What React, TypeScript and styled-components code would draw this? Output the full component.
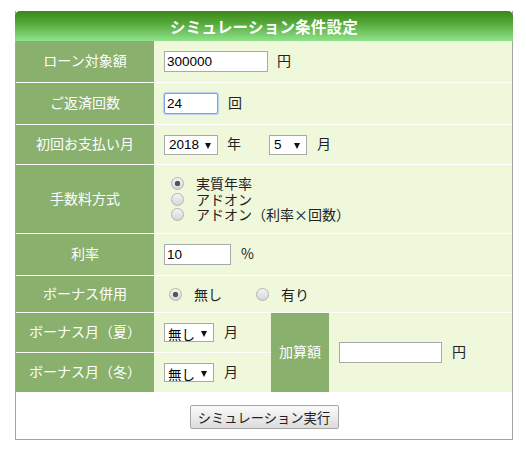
import React from "react";
import styled, { createGlobalStyle } from "styled-components";

const Global = createGlobalStyle`
  html, body { margin: 0; padding: 0; background: #fff; }
  body { font-family: "Noto Sans CJK JP", "Liberation Sans", sans-serif; }
`;

const Page = styled.div`
  padding: 11px 0 0 15px;
`;

const Panel = styled.div`
  width: 498px;
  box-sizing: border-box;
  border: 1px solid #a3a3a3;
  border-top: none;
`;

const Header = styled.div`
  margin: 0 -1px;
  height: 30px;
  border-radius: 5px 5px 0 0;
  background: linear-gradient(#3a8a1b 0%, #55a838 40%, #8fe28b 100%);
  color: #fff;
  font-size: 15.5px;
  font-weight: bold;
  display: flex;
  align-items: center;
  justify-content: center;
  letter-spacing: 0.2px;
`;

const FormGrid = styled.div`
  display: grid;
  grid-template-columns: 138px 117px 58px 1fr;
  grid-template-rows: 42px 42px 40px 69px 42px 37px 40px 40px;
`;

const Label = styled.div<{ $span?: number }>`
  grid-row: span ${(p) => p.$span ?? 1};
  box-sizing: border-box;
  border-bottom: 1px solid #fff;
  background: #89b06c;
  color: #fff;
  font-size: 14px;
  line-height: 1;
  display: flex;
  align-items: center;
  justify-content: center;
  padding-bottom: 3px;
`;

const Value = styled.div<{ $cols?: number; $rows?: number; $pad?: number }>`
  grid-column: span ${(p) => p.$cols ?? 1};
  grid-row: span ${(p) => p.$rows ?? 1};
  box-sizing: border-box;
  border-bottom: 1px solid #fff;
  background: #f0f8dc;
  color: #222;
  font-size: 14px;
  display: flex;
  align-items: center;
  padding-left: ${(p) => p.$pad ?? 10}px;
`;

const TextField = styled.input<{ $w: number; $focus?: boolean }>`
  width: ${(p) => p.$w}px;
  height: 21px;
  box-sizing: border-box;
  border: 1px solid ${(p) => (p.$focus ? "#7aa3e0" : "#a9a9a9")};
  box-shadow: ${(p) => (p.$focus ? "0 0 1px 1px #b8d2f5" : "none")};
  border-radius: ${(p) => (p.$focus ? "2px" : "0")};
  padding: 0 2px;
  font-family: "Liberation Sans", Arial, sans-serif;
  font-size: 13.5px;
  color: #000;
  background: #fff;
  outline: none;
`;

const Unit = styled.span<{ $gap?: number; $after?: number }>`
  margin-left: ${(p) => p.$gap ?? 10}px;
  margin-right: ${(p) => p.$after ?? 0}px;
  margin-bottom: 4px;
  font-size: 14px;
  line-height: 1;
  color: #222;
`;

const SelectWrap = styled.span<{ $w: number; $h?: number }>`
  position: relative;
  display: inline-flex;
  width: ${(p) => p.$w}px;
  height: ${(p) => p.$h ?? 20}px;
`;

const NativeSelect = styled.select<{ $cjk?: boolean }>`
  appearance: none;
  -webkit-appearance: none;
  width: 100%;
  height: 100%;
  box-sizing: border-box;
  border: 1px solid #a9a9a9;
  border-radius: 0;
  background: #fff;
  padding: 0 0 0 ${(p) => (p.$cjk ? 3 : 4)}px;
  font-family: ${(p) =>
    p.$cjk
      ? `"Noto Sans CJK JP", sans-serif`
      : `"Liberation Sans", Arial, sans-serif`};
  font-size: 13.5px;
  color: #000;
  outline: none;
`;

const Arrow = styled.span`
  position: absolute;
  right: 7px;
  top: 50%;
  margin-top: -2px;
  width: 0;
  height: 0;
  border-left: 3.5px solid transparent;
  border-right: 3.5px solid transparent;
  border-top: 6px solid #111;
  pointer-events: none;
`;

const RadioList = styled.div`
  display: flex;
  flex-direction: column;
  gap: 1.5px;
  padding-left: 7px;
`;

const RadioLine = styled.label<{ $after?: number }>`
  display: inline-flex;
  align-items: center;
  gap: 12px;
  height: 14px;
  margin-right: ${(p) => p.$after ?? 0}px;
  font-size: 14px;
  color: #222;
  line-height: 1;
`;

const RadioText = styled.span`
  margin-bottom: 1px;
`;

const Radio = styled.input.attrs({ type: "radio" })`
  appearance: none;
  -webkit-appearance: none;
  margin: 0;
  width: 13px;
  height: 13px;
  border-radius: 50%;
  border: 1px solid #b3b3b3;
  box-sizing: border-box;
  background: linear-gradient(#f4f4f4, #d6d6d6);
  flex: none;
  &:checked {
    background: radial-gradient(circle, #555 0 2.4px, transparent 3px),
      linear-gradient(#f4f4f4, #d6d6d6);
  }
`;

const Footer = styled.div`
  height: 46px;
  display: flex;
  justify-content: center;
  align-items: flex-start;
  padding-top: 12px;
  box-sizing: border-box;
`;

const RunButton = styled.button`
  width: 149px;
  height: 24px;
  border: 1px solid #a5a5a5;
  border-radius: 2px;
  background: linear-gradient(#fbfbfb, #dcdcdc);
  font-family: "Noto Sans CJK JP", sans-serif;
  font-size: 13.3px;
  color: #222;
  padding: 0;
`;

type Opt = { value: string; label: string };

function Select({
  w,
  h,
  cjk,
  value,
  options,
}: {
  w: number;
  h?: number;
  cjk?: boolean;
  value: string;
  options: Opt[];
}) {
  return (
    <SelectWrap $w={w} $h={h}>
      <NativeSelect $cjk={cjk} defaultValue={value}>
        {options.map((o) => (
          <option key={o.value} value={o.value}>
            {o.label}
          </option>
        ))}
      </NativeSelect>
      <Arrow />
    </SelectWrap>
  );
}

const years: Opt[] = ["2017", "2018", "2019", "2020"].map((y) => ({ value: y, label: y }));
const months: Opt[] = Array.from({ length: 12 }, (_, i) => ({
  value: String(i + 1),
  label: String(i + 1),
}));
const bonusMonths: Opt[] = [{ value: "", label: "無し" }, ...months];

export default function App() {
  return (
    <>
      <Global />
      <Page>
        <Panel>
          <Header>シミュレーション条件設定</Header>
          <FormGrid>
            <Label>ローン対象額</Label>
            <Value $cols={3}>
              <TextField $w={104} defaultValue="300000" />
              <Unit $gap={9}>円</Unit>
            </Value>

            <Label>ご返済回数</Label>
            <Value $cols={3}>
              <TextField $w={54} $focus defaultValue="24" />
              <Unit $gap={10}>回</Unit>
            </Value>

            <Label>初回お支払い月</Label>
            <Value $cols={3}>
              <Select w={54} value="2018" options={years} />
              <Unit $gap={9} $after={28}>年</Unit>
              <Select w={38} value="5" options={months} />
              <Unit $gap={10}>月</Unit>
            </Value>

            <Label>手数料方式</Label>
            <Value $cols={3}>
              <RadioList>
                <RadioLine>
                  <Radio name="fee" defaultChecked />
                  <RadioText>実質年率</RadioText>
                </RadioLine>
                <RadioLine>
                  <Radio name="fee" />
                  <RadioText>アドオン</RadioText>
                </RadioLine>
                <RadioLine>
                  <Radio name="fee" />
                  <RadioText>アドオン（利率×回数）</RadioText>
                </RadioLine>
              </RadioList>
            </Value>

            <Label>利率</Label>
            <Value $cols={3}>
              <TextField $w={67} defaultValue="10" />
              <Unit $gap={10}>%</Unit>
            </Value>

            <Label>ボーナス併用</Label>
            <Value $cols={3} $pad={15}>
              <RadioLine $after={34}>
                <Radio name="bonus" defaultChecked />
                <RadioText>無し</RadioText>
              </RadioLine>
              <RadioLine>
                <Radio name="bonus" />
                <RadioText>有り</RadioText>
              </RadioLine>
            </Value>

            <Label>ボーナス月（夏）</Label>
            <Value>
              <Select w={50} h={19} cjk value="" options={bonusMonths} />
              <Unit $gap={10}>月</Unit>
            </Value>
            <Label $span={2}>加算額</Label>
            <Value $rows={2}>
              <TextField $w={103} defaultValue="" />
              <Unit $gap={10}>円</Unit>
            </Value>

            <Label>ボーナス月（冬）</Label>
            <Value>
              <Select w={50} h={19} cjk value="" options={bonusMonths} />
              <Unit $gap={10}>月</Unit>
            </Value>
          </FormGrid>
          <Footer>
            <RunButton type="button">シミュレーション実行</RunButton>
          </Footer>
        </Panel>
      </Page>
    </>
  );
}
